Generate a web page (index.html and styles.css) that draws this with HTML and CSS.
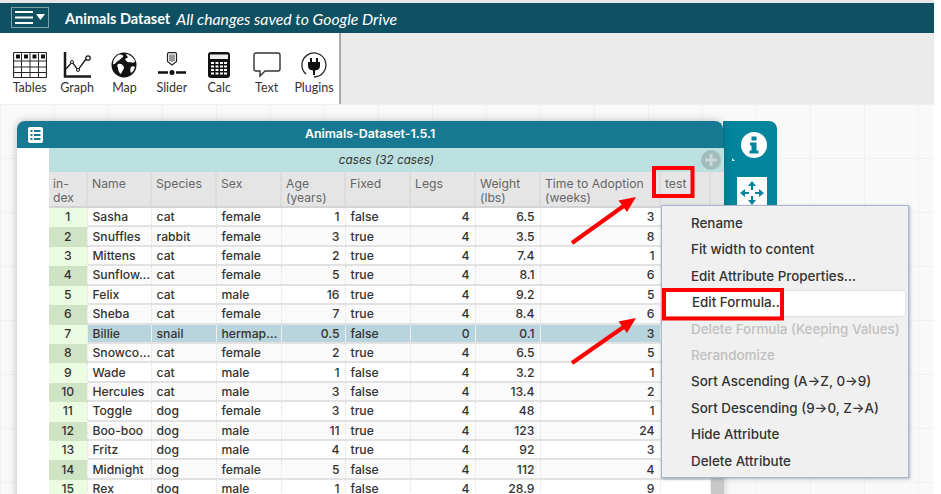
FILE: index.html
```html
<!DOCTYPE html>
<html>
	<head>
		<title>Animals Dataset</title>
		<link rel="stylesheet" href="styles.css">
	</head>
	<body>
		<div class="app">
			<div class="menubar">
				<div class="hamburger">
					<svg width="30" height="15" viewBox="0 0 30 15"><path d="M0 2H18M0 7.500H18M0 13H18" stroke="#fff" stroke-width="2"/><path d="M21 4H30L25.500 10Z" fill="#fff"/></svg>
				</div>
				<span class="doc-name">Animals Dataset</span>
				<span class="doc-status">All changes saved to Google Drive</span>
			</div>
			<div class="toolrow">
				<div class="toolbar">
					<div class="tool">
						<svg width="34" height="26" viewBox="0 0 34 26" fill="none" stroke="#2b2523"><rect x=".5" y=".5" width="33" height="25" rx="1" stroke-width="1.200"/><path d="M0 9H34M0 15H34M0 20.500H34M8.500 0V26M17 0V26M25.500 0V26"/><path d="M3 2.500H7V6.500H3ZM11 2.500H15V6.500H11ZM19.500 2.500H23.500V6.500H19.500ZM28 2.500H32V6.500H28Z" fill="#111" stroke="none"/></svg>
						<span>Tables</span>
					</div>
					<div class="tool">
						<svg width="28" height="26" viewBox="0 0 28 26" fill="none" stroke="#1a1a1a"><path d="M2 0V24.500H28" stroke-width="2.500"/><path d="M3 17L9 10L15 18L23 7" stroke-width="1.300"/><circle cx="25" cy="6" r="2.200" stroke-width="1.300"/><circle cx="9" cy="10" r="1.500" fill="#fff" stroke-width="1"/><circle cx="15" cy="18" r="1.500" fill="#fff" stroke-width="1"/></svg>
						<span>Graph</span>
					</div>
					<div class="tool">
						<svg width="26" height="26" viewBox="0 0 26 26"><circle cx="13" cy="13" r="12.500" fill="#111"/><path d="M7 3C10 2 13 3 12 5C10 6 9 8 7 9C5 10 4 13 2 12C2 8 4 5 7 3ZM15 2C18 2 22 5 24 9C24 11 21 11 19 10C17 11 15 9 14 7C15 6 17 6 17 5C16 4 15 3 15 2ZM7 12C10 11 12 13 13 15C13 18 11 19 10 22C8 21 7 18 7 16C6 15 6 13 7 12ZM20 15C21 14 23 14 24 15C23 18 22 20 20 21C19 19 19 17 20 15Z" fill="#fff"/></svg>
						<span>Map</span>
					</div>
					<div class="tool">
						<svg width="28" height="26" viewBox="0 0 28 26" fill="none" stroke="#222"><path d="M9.500 2Q9.500 .7 11 .7H17Q18.500 .7 18.500 2V9.500L14 13L9.500 9.500Z" stroke-width="1.200"/><path d="M12 2.500V9M14 2.500V10M16 2.500V9" stroke="#333"/><path d="M0 20.500H10M18 20.500H28" stroke="#111" stroke-width="2.500"/><circle cx="14" cy="20.500" r="2.500" fill="#111" stroke="none"/></svg>
						<span>Slider</span>
					</div>
					<div class="tool">
						<svg width="22" height="26" viewBox="0 0 22 26"><rect width="22" height="26" rx="3" fill="#111"/><rect x="2" y="2.500" width="18" height="4.500" fill="#eee"/><path d="M3 10H6V12H3ZM7.500 10H10.500V12H7.500ZM12 10H15V12H12ZM16 10H19V12H16ZM3 13.500H6V15.500H3ZM7.500 13.500H10.500V15.500H7.500ZM12 13.500H15V15.500H12ZM16 13.500H19V15.500H16ZM3 17H6V19H3ZM7.500 17H10.500V19H7.500ZM12 17H15V19H12ZM16 17H19V19H16ZM3 20.500H6V22.500H3ZM7.500 20.500H10.500V22.500H7.500ZM12 20.500H15V22.500H12ZM16 20.500H19V22.500H16Z" fill="#fff"/></svg>
						<span>Calc</span>
					</div>
					<div class="tool">
						<svg width="28" height="26" viewBox="0 0 28 26" fill="none" stroke="#333" stroke-width="1.400"><path d="M3 1H25Q27 1 27 3V17Q27 19 25 19H12L7 24V19H3Q1 19 1 17V3Q1 1 3 1Z"/></svg>
						<span>Text</span>
					</div>
					<div class="tool">
						<svg width="26" height="26" viewBox="0 0 26 26" fill="none"><path d="M5 22A12 12 0 1 1 13 25" stroke="#222" stroke-width="1.300"/><path d="M10 6V10M16 6V10" stroke="#111" stroke-width="2"/><path d="M7 10H19V14Q19 18 14 18.500V23H12V18.500Q7 18 7 14Z" fill="#111"/></svg>
						<span>Plugins</span>
					</div>
				</div>
				<div class="toolrow-rest"></div>
			</div>
			<div class="canvas">
				<div class="inspector">
					<svg class="info-icon" width="26" height="26" viewBox="0 0 26 26"><circle cx="13" cy="13" r="13" fill="#fff"/><path d="M10.500 4.500H15.500V8.500H10.500ZM9 10.500H15.500V18.500H17.500V21.500H8.500V18.500H10.500V13.500H9Z" fill="#00859c"/></svg>
					<div class="inspector-speck"></div>
					<div class="resize-tile">
						<svg width="24" height="24" viewBox="0 0 24 24" fill="#00859c"><path d="M12 0L16 5H8ZM12 24L16 19H8ZM0 12L5 8V16ZM24 12L19 8V16Z"/><rect x="11" y="5" width="2" height="4"/><rect x="11" y="15" width="2" height="4"/><rect x="5" y="11" width="4" height="2"/><rect x="15" y="11" width="4" height="2"/></svg>
					</div>
				</div>
				<div class="window">
					<div class="window-title">
						<svg class="title-icon" width="15" height="16" viewBox="0 0 15 16"><rect width="15" height="16" rx="2" fill="#fff"/><path d="M2.500 3H4.500V5H2.500ZM6 3H12.500V5H6ZM2.500 7H4.500V9H2.500ZM6 7H12.500V9H6ZM2.500 11H4.500V13H2.500ZM6 11H12.500V13H6Z" fill="#177991"/></svg>
						Animals-Dataset-1.5.1
					</div>
					<div class="window-body">
						<div class="gutter"></div>
						<div class="case-area">
							<div class="case-band">
								<em>cases (32 cases)</em>
								<div class="add-attr">
									<svg width="12" height="12" viewBox="0 0 12 12"><path d="M4.500 0H7.500V4.500H12V7.500H7.500V12H4.500V7.500H0V4.500H4.500Z" fill="#c9d8d8"/></svg>
								</div>
							</div>
							<div class="case-grid">
								<table>
									<colgroup>
										<col class="c-index"><col class="c-name"><col class="c-species"><col class="c-sex"><col class="c-age"><col class="c-fixed"><col class="c-legs"><col class="c-weight"><col class="c-time"><col class="c-test">
									</colgroup>
									<thead>
										<tr><th>in-<br>dex</th><th>Name</th><th>Species</th><th>Sex</th><th>Age<br>(years)</th><th>Fixed</th><th>Legs</th><th>Weight<br>(lbs)</th><th>Time to Adoption<br>(weeks)</th><th>test</th></tr>
									</thead>
									<tbody>
										<tr><td class="idx">1</td><td>Sasha</td><td>cat</td><td>female</td><td class="num">1</td><td>false</td><td class="num">4</td><td class="num">6.5</td><td class="num">3</td><td></td></tr>
										<tr><td class="idx">2</td><td>Snuffles</td><td>rabbit</td><td>female</td><td class="num">3</td><td>true</td><td class="num">4</td><td class="num">3.5</td><td class="num">8</td><td></td></tr>
										<tr><td class="idx">3</td><td>Mittens</td><td>cat</td><td>female</td><td class="num">2</td><td>true</td><td class="num">4</td><td class="num">7.4</td><td class="num">1</td><td></td></tr>
										<tr><td class="idx">4</td><td>Sunflow…</td><td>cat</td><td>female</td><td class="num">5</td><td>true</td><td class="num">4</td><td class="num">8.1</td><td class="num">6</td><td></td></tr>
										<tr><td class="idx">5</td><td>Felix</td><td>cat</td><td>male</td><td class="num">16</td><td>true</td><td class="num">4</td><td class="num">9.2</td><td class="num">5</td><td></td></tr>
										<tr><td class="idx">6</td><td>Sheba</td><td>cat</td><td>female</td><td class="num">7</td><td>true</td><td class="num">4</td><td class="num">8.4</td><td class="num">6</td><td></td></tr>
										<tr class="selected"><td class="idx">7</td><td>Billie</td><td>snail</td><td>hermap…</td><td class="num">0.5</td><td>false</td><td class="num">0</td><td class="num">0.1</td><td class="num">3</td><td></td></tr>
										<tr><td class="idx">8</td><td>Snowco…</td><td>cat</td><td>female</td><td class="num">2</td><td>true</td><td class="num">4</td><td class="num">6.5</td><td class="num">5</td><td></td></tr>
										<tr><td class="idx">9</td><td>Wade</td><td>cat</td><td>male</td><td class="num">1</td><td>false</td><td class="num">4</td><td class="num">3.2</td><td class="num">1</td><td></td></tr>
										<tr><td class="idx">10</td><td>Hercules</td><td>cat</td><td>male</td><td class="num">3</td><td>false</td><td class="num">4</td><td class="num">13.4</td><td class="num">2</td><td></td></tr>
										<tr><td class="idx">11</td><td>Toggle</td><td>dog</td><td>female</td><td class="num">3</td><td>true</td><td class="num">4</td><td class="num">48</td><td class="num">1</td><td></td></tr>
										<tr><td class="idx">12</td><td>Boo-boo</td><td>dog</td><td>male</td><td class="num">11</td><td>true</td><td class="num">4</td><td class="num">123</td><td class="num">24</td><td></td></tr>
										<tr><td class="idx">13</td><td>Fritz</td><td>dog</td><td>male</td><td class="num">4</td><td>true</td><td class="num">4</td><td class="num">92</td><td class="num">3</td><td></td></tr>
										<tr><td class="idx">14</td><td>Midnight</td><td>dog</td><td>female</td><td class="num">5</td><td>false</td><td class="num">4</td><td class="num">112</td><td class="num">4</td><td></td></tr>
										<tr><td class="idx">15</td><td>Rex</td><td>dog</td><td>male</td><td class="num">1</td><td>false</td><td class="num">4</td><td class="num">28.9</td><td class="num">9</td><td></td></tr>
									</tbody>
								</table>
								<div class="scrollbar"><div class="scrollbar-head"></div></div>
							</div>
						</div>
					</div>
				</div>
				<ul class="context-menu">
					<li>Rename</li>
					<li>Fit width to content</li>
					<li>Edit Attribute Properties...</li>
					<li class="active">Edit Formula...</li>
					<li class="disabled">Delete Formula (Keeping Values)</li>
					<li class="disabled">Rerandomize</li>
					<li>Sort Ascending (A→Z, 0→9)</li>
					<li>Sort Descending (9→0, Z→A)</li>
					<li>Hide Attribute</li>
					<li>Delete Attribute</li>
				</ul>
			</div>
		</div>
		<!-- red callouts drawn on top of the screenshot -->
		<svg class="callouts" width="941" height="494" viewBox="0 0 941 494" fill="none" stroke="#f00" stroke-width="4">
			<rect x="654" y="168" width="38.500" height="28"/>
			<rect x="664" y="290" width="118" height="28.500"/>
			<path d="M572 243L625 205"/>
			<path d="M636 197L618.500 200.500L627 212Z" fill="#f00" stroke="none"/>
			<path d="M572 363L625 326"/>
			<path d="M636 318L618.500 321.500L627 333Z" fill="#f00" stroke="none"/>
		</svg>
	</body>
</html>
```

FILE: styles.css
```css
body {
  margin: 0;
  background-color: #fff;
  font-family: "Inter", "Liberation Sans", sans-serif;
  overflow: hidden;
}

.app {
  width: 934px;
  height: 494px;
  padding-top: 3px;
  box-sizing: border-box;
  background-color: #e6e6e6;
  display: flex;
  flex-direction: column;
}

.menubar {
  height: 30px;
  flex: none;
  background-color: #0f5162;
  color: #fff;
  display: flex;
  align-items: center;
  font-family: "Lato", sans-serif;
  font-size: 14.500px;
}

.hamburger {
  width: 38px;
  height: 21px;
  margin-left: 11px;
  margin-top: -1px;
  border: 1px solid #7fa0a8;
  box-sizing: border-box;
  display: flex;
  align-items: center;
  justify-content: center;
}

.doc-name {
  margin-left: 16px;
  font-weight: 700;
}

.doc-status {
  margin-left: 6px;
  font-size: 15.800px;
  font-style: italic;
}

.toolrow {
  height: 71px;
  flex: none;
  display: flex;
}

.toolbar {
  width: 341px;
  padding-left: 6px;
  box-sizing: border-box;
  background-color: #fff;
  border-right: 2px solid #aaa;
  display: flex;
}

.toolrow-rest {
  flex: 1;
  background-color: #ebebeb;
}

.tool {
  width: 47.400px;
  padding-top: 19px;
  display: flex;
  flex-direction: column;
  align-items: center;
  font-family: "Lato", sans-serif;
  font-size: 12.500px;
  color: #333;
}

.tool span {
  margin-top: 2px;
}

.canvas {
  flex: 1;
  position: relative;
  overflow: hidden;
  background-color: #f9f9f9;
  background-image: linear-gradient(#f1f1f1 1px, transparent 1px), linear-gradient(90deg, #f1f1f1 1px, transparent 1px);
  background-size: 54px 54px;
}

.window {
  position: absolute;
  left: 17px;
  top: 17px;
  width: 706px;
  height: 400px;
  background-color: #fff;
  border-radius: 8px 8px 0 0;
  box-shadow: 0 0 9px rgba(0, 0, 0, 0.25);
}

.window-title {
  height: 27px;
  position: relative;
  background-color: #177991;
  border-radius: 8px 8px 0 0;
  color: #fff;
  font-size: 12.400px;
  font-weight: 600;
  line-height: 26px;
  text-align: center;
}

.title-icon {
  position: absolute;
  left: 11px;
  top: 6px;
}

.window-body {
  display: flex;
}

.gutter {
  width: 32px;
  flex: none;
}

.case-area {
  flex: 1;
}

.case-band {
  height: 24px;
  position: relative;
  background-color: #bcdfdf;
  font-size: 11.700px;
  line-height: 25px;
  text-align: center;
  color: #333;
}

.add-attr {
  position: absolute;
  left: 652px;
  top: 2px;
  width: 20px;
  height: 20px;
  border-radius: 50%;
  background-color: #a2bcbc;
  display: flex;
  align-items: center;
  justify-content: center;
}

.case-grid {
  display: flex;
}

table {
  width: 661px;
  flex: none;
  border-collapse: collapse;
  table-layout: fixed;
  font-size: 12.200px;
  font-weight: 500;
}

.c-index { width: 38px; }
.c-name { width: 64px; }
.c-species { width: 65px; }
.c-sex { width: 65px; }
.c-age { width: 64px; }
.c-fixed { width: 65px; }
.c-legs { width: 65px; }
.c-weight { width: 65px; }
.c-time { width: 120px; }
.c-test { width: 50px; }

th {
  height: 35px;
  padding: 5px 4px 0;
  box-sizing: border-box;
  background-color: #e5e5e5;
  border-right: 2px solid #dcdcdc;
  border-bottom: 2px solid #d4d4d4;
  color: #666;
  font-weight: 400;
  font-size: 12.200px;
  line-height: 13.500px;
  text-align: left;
  vertical-align: top;
  white-space: nowrap;
}

td {
  height: 19.430px;
  padding: 1px 5px 0;
  box-sizing: border-box;
  border-right: 1px dotted #ddd;
  border-bottom: 2px solid #e2e2e2;
  color: #333;
  line-height: 16px;
  white-space: nowrap;
  overflow: hidden;
}

tbody tr:nth-child(even) td {
  background-color: #fafafa;
}

td.num {
  text-align: right;
}

td.idx {
  background-color: #ecfce3;
  border-bottom-color: #ecfce3;
  text-align: center;
}

tbody tr:nth-child(even) td.idx {
  background-color: #cfe3c5;
  border-bottom-color: #cfe3c5;
}

tbody tr.selected td {
  background-color: #b8d4dc;
}

tbody tr.selected td.idx {
  background-color: #ecfce3;
}

.scrollbar {
  width: 13px;
  background-color: #c8c8c8;
}

.scrollbar-head {
  height: 35px;
  background-color: #e5e5e5;
  border-bottom: 2px solid #d4d4d4;
  box-sizing: border-box;
}

.inspector {
  position: absolute;
  left: 723px;
  top: 17px;
  width: 54px;
  height: 170px;
  box-sizing: border-box;
  padding: 11px 0 0 18px;
  background-color: #00859c;
  border-radius: 0 8px 0 0;
}

.info-icon {
  display: block;
}

.inspector-speck {
  position: absolute;
  left: 9px;
  top: 37px;
  width: 3px;
  height: 3px;
  background-color: #e8f4f6;
  clip-path: polygon(0 0, 100% 100%, 0 100%);
}

.resize-tile {
  width: 30px;
  height: 40px;
  margin: 19px 0 0 -4px;
  padding-top: 4px;
  box-sizing: border-box;
  background-color: #fff;
  text-align: center;
}

.context-menu {
  position: absolute;
  left: 661px;
  top: 101px;
  width: 248px;
  margin: 0;
  padding: 5px 0 2px;
  box-sizing: border-box;
  list-style: none;
  background-color: #f0f0f0;
  border: 1px solid #a9b6d0;
  box-shadow: 1px 1px 3px rgba(60, 70, 100, 0.4);
  font-size: 13.400px;
  font-weight: 500;
  color: #333;
}

.context-menu li {
  height: 26.400px;
  padding-left: 29px;
  box-sizing: border-box;
  line-height: 24px;
}

.context-menu li.active {
  margin: 0 2px 0 1px;
  padding-left: 28px;
  background-color: #fff;
  border: 1px solid #e2e2e2;
  border-radius: 3px;
  line-height: 23px;
}

.context-menu li.disabled {
  color: #c0c0c0;
}

.callouts {
  position: absolute;
  left: 0;
  top: 0;
}
```
